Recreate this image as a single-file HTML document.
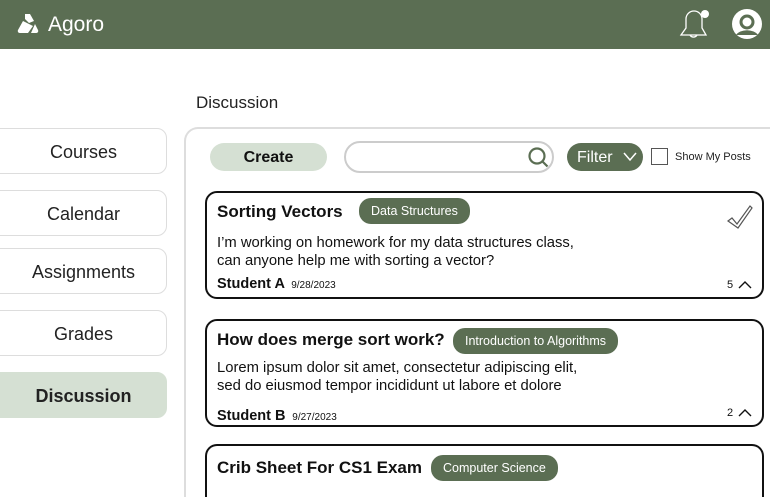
<!DOCTYPE html>
<html><head><style>
*{margin:0;padding:0;box-sizing:border-box}
html,body{width:770px;height:497px;overflow:hidden}
body{background:#fff;font-family:"Liberation Sans",sans-serif;position:relative;color:#111}
.a{position:absolute}
.hdr{left:0;top:0;width:770px;height:49px;background:#5b6e53}
.nav{left:-20px;width:187px;height:46px;border:1.5px solid #ddd;border-radius:10px;text-align:center;line-height:47px;font-size:18px;color:#222;padding-left:20px}
.card{left:205px;width:559px;border:2px solid #111;border-radius:12px;background:#fff}
.tag{background:#5b6e53;color:#fff;font-size:12.5px;border-radius:12px;height:26px;line-height:26px;padding:0 12px;display:inline-block}
.t{font-weight:bold;font-size:17px}
.body{font-size:14.8px;line-height:18px}
</style></head><body>
<div class="a hdr"></div>
<svg class="a" style="left:17px;top:13px" width="22" height="22" viewBox="0 0 22 22"><path d="M8 1h5l4 7-5 2-4-4z" fill="#fff"/><path d="M6 8l10 5-5 7H3a2 2 0 0 1-2-3z" fill="#fff"/><path d="M18 11l3 6a2 2 0 0 1-2 3h-5z" fill="#fff"/></svg>
<div class="a" style="left:48px;top:13px;font-size:21px;color:#fff">Agoro</div>
<svg class="a" style="left:677px;top:8px" width="36" height="34" viewBox="0 0 36 34"><path d="M4 27h25l-4-7V11a8 8 0 0 0-16 0v9z" fill="none" stroke="#fff" stroke-width="1.3"/><path d="M13 27a4 4 0 0 0 7 0" fill="none" stroke="#fff" stroke-width="1.3"/><circle cx="28" cy="6" r="4" fill="#fff"/></svg>
<svg class="a" style="left:731px;top:8px" width="32" height="32" viewBox="0 0 32 32"><circle cx="16" cy="16" r="15" fill="#fff"/><circle cx="16" cy="14" r="6" fill="none" stroke="#5b6e53" stroke-width="3"/><path d="M5 27a12 8 0 0 1 22 0" fill="#5b6e53"/></svg>
<div class="a" style="left:196px;top:93px;font-size:17px;color:#222">Discussion</div>
<div class="a nav" style="top:128px">Courses</div>
<div class="a nav" style="top:190px">Calendar</div>
<div class="a nav" style="top:248px">Assignments</div>
<div class="a nav" style="top:310px">Grades</div>
<div class="a nav" style="top:372px;background:#d5e0d3;border-color:#d5e0d3;font-weight:bold">Discussion</div>
<div class="a" style="left:184px;top:127px;width:586px;height:370px;border:2px solid #ddd;border-right:none;border-bottom:none;border-radius:14px 0 0 0"></div>
<div class="a" style="left:210px;top:143px;width:117px;height:28px;border-radius:14px;background:#d5e0d3;text-align:center;line-height:29px;font-weight:bold;font-size:16px">Create</div>
<div class="a" style="left:344px;top:141px;width:210px;height:32px;border:2.5px solid #ccc;border-radius:16px"></div>
<svg class="a" style="left:527px;top:146px" width="24" height="22" viewBox="0 0 24 22"><circle cx="10" cy="10" r="7.5" fill="none" stroke="#5b6e53" stroke-width="2.2"/><path d="M15.5 15.5l5 5" stroke="#5b6e53" stroke-width="2.2"/></svg>
<div class="a" style="left:567px;top:143px;width:76px;height:28px;border-radius:14px;background:#5b6e53;color:#fff;font-size:16px;line-height:29px;padding-left:10px">Filter</div>
<svg class="a" style="left:623px;top:152px" width="14" height="10" viewBox="0 0 14 10"><path d="M1 1l6 7 6-7" fill="none" stroke="#fff" stroke-width="1.5"/></svg>
<div class="a" style="left:651px;top:148px;width:17px;height:17px;border:1.5px solid #555"></div>
<div class="a" style="left:675px;top:151px;font-size:11px;color:#222">Show My Posts</div>

<div class="a card" style="top:191px;height:108px">
 <div class="a t" style="left:10px;top:9px">Sorting Vectors</div>
 <div class="a tag" style="left:152px;top:5px">Data Structures</div>
 <svg class="a" style="left:518px;top:10px" width="30" height="30" viewBox="0 0 30 30"><path d="M3 18l4-3 5 6L25 3l2 2-14 20z" fill="none" stroke="#555" stroke-width="1.2"/></svg>
 <div class="a body" style="left:10px;top:41px">I’m working on homework for my data structures class,<br>can anyone help me with sorting a vector?</div>
 <div class="a" style="left:10px;top:83px;font-weight:bold;font-size:14.5px">Student A <span style="font-weight:normal;font-size:10px">&nbsp;9/28/2023</span></div>
 <div class="a" style="left:520px;top:86px;font-size:11px">5</div>
 <svg class="a" style="left:531px;top:87px" width="14" height="9" viewBox="0 0 14 9"><path d="M1 8l6-6 6 6" fill="none" stroke="#111" stroke-width="1.4"/></svg>
</div>
<div class="a card" style="top:319px;height:108px">
 <div class="a t" style="left:10px;top:9px">How does merge sort work?</div>
 <div class="a tag" style="left:246px;top:7px">Introduction to Algorithms</div>
 <div class="a body" style="left:10px;top:38px">Lorem ipsum dolor sit amet, consectetur adipiscing elit,<br>sed do eiusmod tempor incididunt ut labore et dolore</div>
 <div class="a" style="left:10px;top:87px;font-weight:bold;font-size:14.5px">Student B <span style="font-weight:normal;font-size:10px">&nbsp;9/27/2023</span></div>
 <div class="a" style="left:520px;top:86px;font-size:11px">2</div>
 <svg class="a" style="left:531px;top:87px" width="14" height="9" viewBox="0 0 14 9"><path d="M1 8l6-6 6 6" fill="none" stroke="#111" stroke-width="1.4"/></svg>
</div>
<div class="a card" style="top:444px;height:53px;border-bottom:none;border-radius:12px 12px 0 0">
 <div class="a t" style="left:10px;top:12px">Crib Sheet For CS1 Exam</div>
 <div class="a tag" style="left:224px;top:9px">Computer Science</div>
</div>
</body></html>
